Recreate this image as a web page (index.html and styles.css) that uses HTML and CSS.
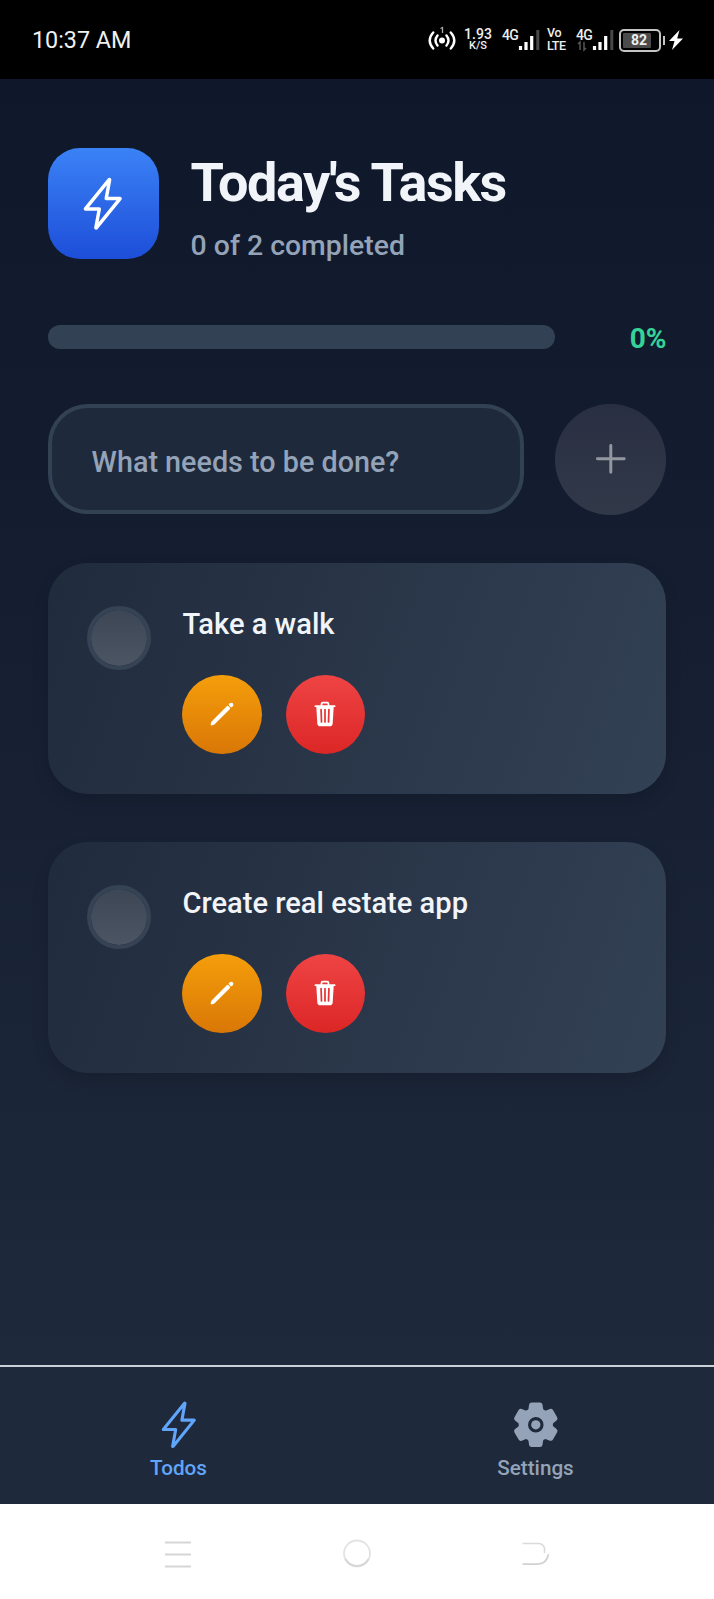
FILE: index.html
```
<!DOCTYPE html>
<html lang="en">
<head>
<meta charset="utf-8">
<title>Today's Tasks</title>
<link rel="stylesheet" href="styles.css">
</head>
<body>
<svg class="defs" width="0" height="0">
  <symbol id="flash" viewBox="0 0 512 512"><path fill="none" stroke="currentColor" stroke-width="32" stroke-linecap="round" stroke-linejoin="round" d="M315.27 33L96 304h128l-31.51 173.23a2.36 2.36 0 002.33 2.77h0a2.36 2.36 0 001.89-.95L416 208H288l31.66-173.25a2.45 2.45 0 00-2.44-2.75h0a2.42 2.42 0 00-1.95 1z"/></symbol>
  <symbol id="pencil" viewBox="0 0 512 512"><path fill="currentColor" stroke="currentColor" stroke-width="44" stroke-linecap="round" stroke-linejoin="round" d="M358.62 129.28L86.49 402.08 70 442l39.92-16.49 272.8-272.13-24.1-24.1z"/><path fill="currentColor" stroke="currentColor" stroke-width="44" stroke-linecap="round" stroke-linejoin="round" d="M413.07 74.84l-11.79 11.78 24.1 24.1 11.79-11.79a16.51 16.51 0 000-23.34l-.75-.75a16.51 16.51 0 00-23.35 0z"/></symbol>
  <symbol id="trash" viewBox="0 0 512 512"><path fill="currentColor" d="M432 96h-96V72a40 40 0 00-40-40h-80a40 40 0 00-40 40v24H80a16 16 0 000 32h17l19 304.92c1.42 26.85 22 47.08 48 47.08h184c26.13 0 46.3-19.78 48-47l19-305h17a16 16 0 000-32zM192.57 416H192a16 16 0 01-16-15.43l-8-224a16 16 0 1132-1.14l8 224A16 16 0 01192.57 416zM272 400a16 16 0 01-32 0V176a16 16 0 0132 0zm32-304h-96V72a7.91 7.91 0 018-8h80a7.91 7.91 0 018 8zm32 304.57A16 16 0 01320 416h-.58A16 16 0 01304 399.43l8-224a16 16 0 1132 1.14z"/></symbol>
</svg>
<div class="phone">
  <header class="status">
    <span class="clock">10:37 AM</span>
    <div class="indicators">
      <svg class="hotspot" width="28" height="28" viewBox="0 0 28 28"><g fill="none" stroke="#fff" stroke-width="2.4" stroke-linecap="round"><path d="M5.2 7.500Q-1.800 15.500 5.200 23.500M9.500 10.500Q5.500 15.500 9.500 20.500M22.800 7.500Q29.800 15.500 22.800 23.500M18.500 10.500Q22.500 15.500 18.500 20.500"/></g><circle cx="14" cy="15.500" r="3" fill="#fff"/><path d="M12.500 3.500L14.500 2.500V8" fill="none" stroke="#aaa" stroke-width="1.300"/></svg>
      <div class="pair speed"><span class="pair-a">1.93</span><span class="pair-b">K/S</span></div>
      <div class="signal"><span class="net">4G</span><svg width="38" height="24" viewBox="0 0 38 24"><path d="M18.500 18v4M24 14v8M29.700 8v14" stroke="#fff" stroke-width="3.200"/><path d="M35.800 2v20" stroke="#484848" stroke-width="3"/></svg></div>
      <div class="pair volte"><span class="pair-a">Vo</span><span class="pair-b">LTE</span></div>
      <div class="signal second"><span class="net">4G</span><svg width="38" height="24" viewBox="0 0 38 24"><path d="M18.500 18v4M24 14v8M29.700 8v14" stroke="#fff" stroke-width="3.200"/><path d="M35.800 2v20" stroke="#484848" stroke-width="3"/><path d="M2 16l2-2v8M8 14v8l2-2" fill="none" stroke="#555" stroke-width="1.500"/></svg></div>
      <div class="battery"><span class="level">82</span></div><span class="nub"></span>
      <svg class="bolt" width="14" height="20" viewBox="0 0 14 20"><path d="M10.500 0L0 11h5.500L3 20 14 8.500H8.200z" fill="#fff"/></svg>
    </div>
  </header>
  <main class="app">
    <section class="hero">
      <div class="logo"><svg width="55.500" height="55.500"><use href="#flash"/></svg></div>
      <div class="heading"><h1>Today's Tasks</h1><p>0 of 2 completed</p></div>
    </section>
    <section class="progress"><div class="track"></div><span class="percent">0%</span></section>
    <section class="composer">
      <div class="field">What needs to be done?</div>
      <div class="add"><svg width="47.600" height="47.600" viewBox="0 0 512 512"><path d="M256 112v288M400 256H112" fill="none" stroke="#9297a0" stroke-width="32" stroke-linecap="round"/></svg></div>
    </section>
    <section class="list">
      <article class="card">
        <div class="check"></div>
        <div class="task"><h2>Take a walk</h2><div class="actions"><div class="btn edit"><svg width="28" height="28"><use href="#pencil"/></svg></div><div class="btn delete"><svg width="28" height="28"><use href="#trash"/></svg></div></div></div>
      </article>
      <article class="card">
        <div class="check"></div>
        <div class="task"><h2>Create real estate app</h2><div class="actions"><div class="btn edit"><svg width="28" height="28"><use href="#pencil"/></svg></div><div class="btn delete"><svg width="28" height="28"><use href="#trash"/></svg></div></div></div>
      </article>
    </section>
  </main>
  <nav class="tabs">
    <div class="tab active"><svg width="49.600" height="49.600"><use href="#flash"/></svg><span>Todos</span></div>
    <div class="tab"><svg width="49.600" height="49.600" viewBox="0 0 512 512"><g fill="currentColor"><circle cx="256" cy="256" r="48"/><path d="M470.39 300l-.47-.38-31.56-24.75a16.11 16.11 0 01-6.1-13.33v-11.56a16 16 0 016.11-13.22L469.92 212l.47-.38a26.68 26.68 0 005.900-34.060l-42.710-73.900a1.590 1.590 0 01-.130-.220A26.860 26.860 0 00401 92.140l-.350.130-37.100 14.930a15.940 15.940 0 01-14.470-1.290q-4.920-3.100-10-5.860a15.940 15.940 0 01-8.190-11.820l-5.590-39.590-.120-.720A27.220 27.220 0 00298.760 26h-85.520a26.920 26.920 0 00-26.450 22.390l-.090.560-5.570 39.670a16 16 0 01-8.130 11.820 175.210 175.210 0 00-10 5.820 15.920 15.920 0 01-14.430 1.270l-37.130-15-.350-.140a26.870 26.870 0 00-32.480 11.340l-.130.220-42.770 73.950a26.710 26.710 0 005.900 34.100l.470.380 31.560 24.750a16.110 16.110 0 016.100 13.330v11.560a16 16 0 01-6.110 13.220L42.080 300l-.470.380a26.680 26.680 0 00-5.900 34.060l42.710 73.900a1.590 1.590 0 01.130.220 26.860 26.860 0 0032.450 11.300l.350-.130 37.070-14.930a15.940 15.940 0 0114.470 1.290q4.920 3.110 10 5.860a15.940 15.940 0 018.190 11.820l5.560 39.590.120.720A27.220 27.220 0 00213.240 486h85.520a26.920 26.920 0 0026.450-22.390l.090-.560 5.570-39.670a16 16 0 018.180-11.820c3.420-1.840 6.760-3.790 10-5.820a15.920 15.920 0 0114.430-1.270l37.130 14.950.350.140a26.850 26.850 0 0032.480-11.340 2.530 2.530 0 01.130-.220l42.710-73.890a26.700 26.700 0 00-5.890-34.110zm-134.480-40.240a80 80 0 11-83.660-83.670 80.210 80.210 0 0183.660 83.670z"/></g></svg><span>Settings</span></div>
  </nav>
  <footer class="system">
    <svg width="28" height="30" viewBox="0 0 28 30"><path d="M1 4.500h26M1 16.500h26M1 28.500h26" stroke="#d6d6d6" stroke-width="2"/></svg>
    <svg width="30" height="30" viewBox="0 0 30 30"><circle cx="15" cy="15.500" r="13" fill="none" stroke="#e3e3e3" stroke-width="1.800"/><path d="M3.500 21a13 13 0 0 0 23 0" fill="none" stroke="#d6d6d6" stroke-width="1.800"/></svg>
    <svg width="30" height="30" viewBox="0 0 30 30"><path d="M1.500 5.500H17q5 0 6.500 4.500v5" fill="none" stroke="#dadada" stroke-width="1.600"/><path d="M1.500 26.200H17q8.500-.5 10.500-10" fill="none" stroke="#d2d2d2" stroke-width="1.800"/></svg>
  </footer>
</div>
</body>
</html>
```
FILE: styles.css
```
* { box-sizing: border-box; }
body { margin: 0; font-family: Roboto, "Liberation Sans", sans-serif; }
h1, h2, p { margin: 0; }
svg { display: block; flex: none; }
.defs { position: absolute; }
.phone { width: 714px; height: 1599px; display: flex; flex-direction: column; overflow: hidden; background: #fff; }

.status { height: 79px; flex: none; background: #000; color: #fff; display: flex; justify-content: space-between; align-items: center; padding: 1px 31px 0 32px; }
.clock { font-size: 23.300px; color: #f0f0f0; }
.indicators { display: flex; align-items: center; }
.hotspot { margin-top: -2px; }
.pair { display: flex; flex-direction: column; align-items: center; font-weight: 500; color: #eee; margin-top: -1px; }
.pair span { line-height: 12px; }
.speed { width: 28px; margin-left: 8px; }
.speed .pair-a { font-size: 14px; }
.speed .pair-b { font-size: 11px; }
.signal { display: flex; margin-left: 10px; width: 38px; position: relative; }
.net { position: absolute; left: 0; top: 0; font-size: 14px; line-height: 14px; letter-spacing: -.8px; color: #eee; font-weight: 500; }
.volte { width: 21px; margin-left: 7px; align-items: flex-start; }
.volte span { font-size: 12.500px; line-height: 12.500px; letter-spacing: -.4px; }
.signal.second { margin-left: 8px; }
.battery { width: 42px; height: 23px; margin-left: 5px; border: 2px solid #c4c4c4; border-radius: 5px; padding: 2px; }
.level { display: block; width: 28px; height: 15px; background: #4b4b4b; border-radius: 1px; font-size: 14px; line-height: 15px; font-weight: 700; padding-left: 8px; color: #eee; }
.nub { width: 2px; height: 9px; margin-left: 2px; background: #c4c4c4; }
.bolt { margin-left: 4px; margin-top: -1px; }

.app { flex: none; height: 1286px; padding: 69px 47.600px 0; background: linear-gradient(#0f172a, #1e293b); display: flex; flex-direction: column; }
.hero { display: flex; height: 111px; gap: 32px; }
.logo { width: 111px; height: 111px; flex: none; border-radius: 32px; background: linear-gradient(#3b82f6, #1d4ed8); color: #fff; display: flex; align-items: center; justify-content: center; }
.heading { padding-top: 3px; white-space: nowrap; }
h1 { font-size: 54px; line-height: 64px; font-weight: 700; letter-spacing: -1.500px; color: #f1f5f9; }
.heading p { margin-top: 14px; font-size: 28.400px; line-height: 34px; font-weight: 500; color: #94a3b8; }
.progress { margin-top: 65px; height: 27px; display: flex; justify-content: space-between; }
.track { width: 507.500px; height: 24px; margin-top: 1px; border-radius: 12px; background: #334155; }
.percent { font-size: 28px; line-height: 30px; font-weight: 700; color: #34d399; }
.composer { margin-top: 52.500px; display: flex; justify-content: space-between; align-items: center; height: 111px; }
.field { width: 476px; height: 110px; border: 4px solid #334155; border-radius: 40px; background: #1e293b; color: #94a3b8; padding: 5px 0 0 40px; display: flex; align-items: center; font-size: 28.750px; font-weight: 500; }
.add { width: 111px; height: 111px; border-radius: 50%; background: linear-gradient(#292f42, #313949); display: flex; align-items: center; justify-content: center; }
.list { margin-top: 48px; display: flex; flex-direction: column; gap: 48px; }
.card { height: 231px; border-radius: 40px; padding: 43px 40px 0 39.500px; display: flex; gap: 31.400px; background: linear-gradient(110deg, #202b3c, #334155); box-shadow: 0 8px 16px rgba(0,0,0,.15); }
.check { width: 64px; height: 64px; flex: none; border-radius: 50%; border: 4px solid #354355; background: linear-gradient(#3c4654, #4b5563) padding-box; }
.task h2 { font-size: 29.100px; line-height: 36px; font-weight: 500; color: #f1f5f9; white-space: nowrap; }
.actions { margin-top: 33px; display: flex; gap: 24px; }
.btn { width: 79.300px; height: 79.300px; border-radius: 50%; color: #fff; display: flex; align-items: center; justify-content: center; }
.edit { background: linear-gradient(#f59e0b, #d97706); }
.delete { background: linear-gradient(#ef4444, #dc2626); }

.tabs { height: 138.500px; flex: none; background: #1e293b; border-top: 2px solid #ccd0d8; display: flex; }
.tab { flex: 1; display: flex; flex-direction: column; align-items: center; padding-top: 32.500px; color: #94a3b8; }
.tab span { margin-top: 6px; font-size: 20.700px; line-height: 27px; font-weight: 500; }
.tab.active { color: #60a5fa; }
.system { flex: 1; background: #fff; display: flex; justify-content: space-between; padding: 34px 163px 0 164px; }
```
